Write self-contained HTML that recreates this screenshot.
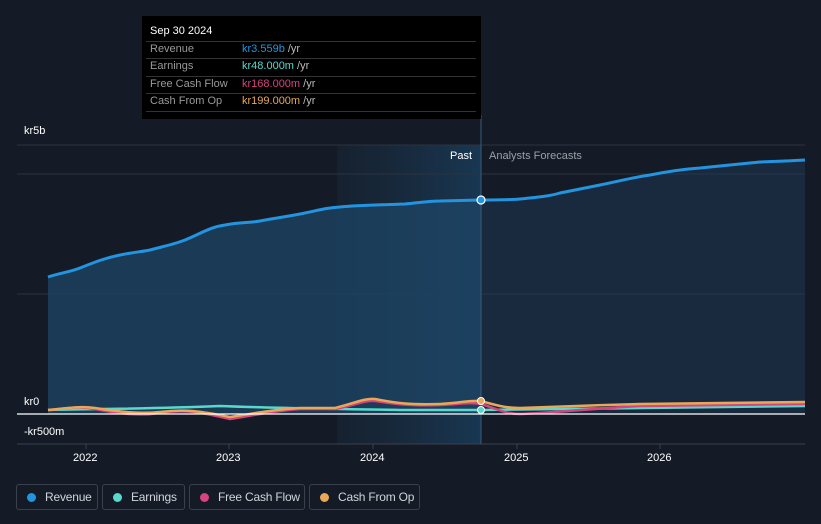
<!DOCTYPE html><html><head><style>
body{margin:0;width:821px;height:524px;background:#151b26;font-family:"Liberation Sans",sans-serif;overflow:hidden;position:relative;color:#fff}
.t{position:absolute;font-size:11px;white-space:nowrap}
.lg{position:absolute;top:484px;height:26px;border:1px solid #3a414c;border-radius:3px;font-size:12px;color:#d0d4da;line-height:24px;box-sizing:border-box;white-space:nowrap;overflow:hidden;letter-spacing:-0.2px}
.lg i{display:inline-block;width:9px;height:9px;border-radius:50%;margin:0 9px 0 10px;vertical-align:-1px}
</style></head><body>
<svg width="821" height="524" style="position:absolute;left:0;top:0">
<defs>
<linearGradient id="p" x1="0" x2="1"><stop offset="0" stop-color="#1b3a55" stop-opacity=".2"/><stop offset="1" stop-color="#1b4a70" stop-opacity=".6"/></linearGradient>
</defs>
<rect x="337" y="145" width="144" height="299" fill="url(#p)"/>
<line x1="17" x2="805" y1="145" y2="145" stroke="#2c333e"/>
<line x1="17" x2="805" y1="174" y2="174" stroke="#2c333e"/>
<line x1="17" x2="805" y1="294" y2="294" stroke="#2c333e"/>
<line x1="17" x2="805" y1="444" y2="444" stroke="#3a414c"/>
<path d="M48,277 C60,273 70,272 80,268 C95,262 105,258 120,255 C135,252 140,252 150,250 C165,246 175,244 185,240 C200,234 210,227 225,225 C240,222 250,223 260,221 C275,218 285,217 300,214 C320,210 325,208 340,207 C360,205 380,205 405,204 C425,202 430,201 440,201 L481,200 L481,414 L48,414Z" fill="#1d4566" fill-opacity=".75"/>
<path d="M481,200 C500,200 510,200 520,199 C540,197 550,196 560,193 C580,189 590,187 600,185 C620,181 635,177 650,175 C670,171 685,169 700,168 C730,165 740,164 760,162 C780,161 790,161 805,160 L805,414 L481,414Z" fill="#1d3a55" fill-opacity=".5"/>
<path d="M48,277 C60,273 70,272 80,268 C95,262 105,258 120,255 C135,252 140,252 150,250 C165,246 175,244 185,240 C200,234 210,227 225,225 C240,222 250,223 260,221 C275,218 285,217 300,214 C320,210 325,208 340,207 C360,205 380,205 405,204 C425,202 430,201 440,201 L481,200 C500,200 510,200 520,199 C540,197 550,196 560,193 C580,189 590,187 600,185 C620,181 635,177 650,175 C670,171 685,169 700,168 C730,165 740,164 760,162 C780,161 790,161 805,160" fill="none" stroke="#2394df" stroke-width="3"/>
<line x1="481" x2="481" y1="115" y2="444" stroke="#3a5a78"/>
<path d="M48,410 C80,409 150,409 220,406 C270,408 340,409 400,410 L481,410 C520,410 600,408 805,406" fill="none" stroke="#58d9cc" stroke-width="2.5"/>
<path d="M48,410 C70,408 80,406 95,409 C120,414 140,416 160,413 C185,409 200,412 230,419 C255,415 280,410 300,409 L335,409 C355,405 365,400 375,401 C395,404 410,406 440,405 C460,404 470,402 481,404 C495,408 505,414 520,414 C550,413 600,408 640,406 L805,404" fill="none" stroke="#d6437f" stroke-width="2.5"/>
<path d="M48,410 C70,408 80,406 95,408 C120,412 140,414 160,412 C185,409 200,411 230,417 C255,413 280,409 300,408 L335,408 C355,403 365,398 375,399 C395,403 410,405 440,404 C460,403 470,400 481,401 C495,405 505,408 520,408 C550,407 600,405 640,404 L805,402" fill="none" stroke="#e9a858" stroke-width="2.5"/>
<line x1="17" x2="805" y1="414" y2="414" stroke="#fff" stroke-width="1.2"/>
<circle cx="481" cy="200" r="4" fill="#2394df" stroke="#fff" stroke-width="1.2"/>
<circle cx="481" cy="410" r="3.5" fill="#58d9cc" stroke="#fff"/>
<circle cx="481" cy="401" r="3.5" fill="#e9a858" stroke="#fff"/>
<g stroke="#3a414c"><line x1="86" x2="86" y1="444" y2="449"/><line x1="229" x2="229" y1="444" y2="449"/><line x1="373" x2="373" y1="444" y2="449"/><line x1="517" x2="517" y1="444" y2="449"/><line x1="660" x2="660" y1="444" y2="449"/></g>
</svg>
<div style="position:absolute;left:142px;top:16px;width:339px;height:103px;background:#000"></div>
<div class="t" style="left:150px;top:25px;color:#fff">Sep 30 2024</div>
<div style="position:absolute;left:146px;top:41px;width:330px;border-top:1px solid #333"></div>
<div style="position:absolute;left:146px;top:58px;width:330px;border-top:1px solid #333"></div>
<div style="position:absolute;left:146px;top:76px;width:330px;border-top:1px solid #333"></div>
<div style="position:absolute;left:146px;top:93px;width:330px;border-top:1px solid #333"></div>
<div style="position:absolute;left:146px;top:111px;width:330px;border-top:1px solid #333"></div>
<div class="t" style="left:150px;top:43px;color:#999">Revenue</div><div class="t" style="left:242px;top:43px;color:#2394df">kr3.559b <span style="color:#bbb">/yr</span></div>
<div class="t" style="left:150px;top:60px;color:#999">Earnings</div><div class="t" style="left:242px;top:60px;color:#58d9cc">kr48.000m <span style="color:#bbb">/yr</span></div>
<div class="t" style="left:150px;top:78px;color:#999">Free Cash Flow</div><div class="t" style="left:242px;top:78px;color:#d6437f">kr168.000m <span style="color:#bbb">/yr</span></div>
<div class="t" style="left:150px;top:95px;color:#999">Cash From Op</div><div class="t" style="left:242px;top:95px;color:#e9a858">kr199.000m <span style="color:#bbb">/yr</span></div>
<div class="t" style="left:24px;top:125px">kr5b</div>
<div class="t" style="left:24px;top:396px">kr0</div>
<div class="t" style="left:24px;top:426px">-kr500m</div>
<div class="t" style="left:450px;top:150px">Past</div>
<div class="t" style="left:489px;top:150px;color:#9aa0a8">Analysts Forecasts</div>
<div class="t" style="left:73px;top:452px">2022</div>
<div class="t" style="left:216px;top:452px">2023</div>
<div class="t" style="left:360px;top:452px">2024</div>
<div class="t" style="left:504px;top:452px">2025</div>
<div class="t" style="left:647px;top:452px">2026</div>
<div class="lg" style="left:16px;width:82px"><i style="background:#2394df"></i>Revenue</div>
<div class="lg" style="left:102px;width:83px"><i style="background:#58d9cc"></i>Earnings</div>
<div class="lg" style="left:189px;width:116px"><i style="background:#d6437f"></i>Free Cash Flow</div>
<div class="lg" style="left:309px;width:111px"><i style="background:#e9a858"></i>Cash From Op</div>
</body></html>
